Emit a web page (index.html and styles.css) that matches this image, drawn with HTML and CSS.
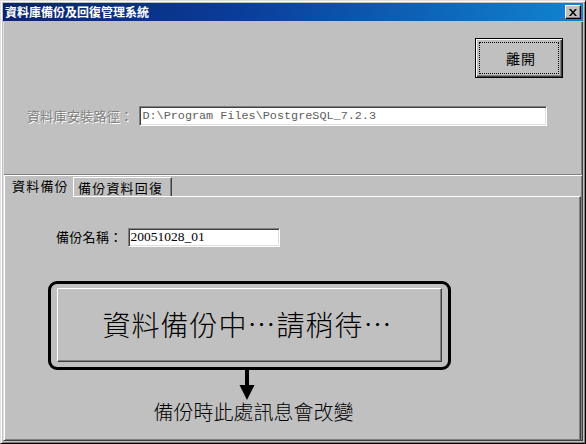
FILE: index.html
```html
<!DOCTYPE html>
<html lang="zh-Hant">
<head>
<meta charset="utf-8">
<title>資料庫備份及回復管理系統</title>
<link rel="stylesheet" href="styles.css">
</head>
<body>
<div class="window">
  <div class="titlebar">
    <span class="title">資料庫備份及回復管理系統</span>
    <span class="close"><svg width="8" height="7" viewBox="0 0 8 7"><path d="M0 0h2l2 2.5L6 0h2L5 3.5 8 7H6L4 4.5 2 7H0l3-3.5z" fill="#000"/></svg></span>
  </div>
  <div class="client">
    <div class="top">
      <div class="btn-row">
        <button class="btn default"><span class="focus">離開</span></button>
      </div>
      <div class="path-row">
        <span class="label disabled">資料庫安裝路徑：</span>
        <div class="field path">D:\Program Files\PostgreSQL_7.2.3</div>
      </div>
    </div>
    <div class="sep"></div>
    <div class="tabs">
      <div class="tab active">資料備份</div>
      <div class="tab">備份資料回復</div>
      <div class="tab-fill"></div>
    </div>
    <div class="panel">
      <div class="name-row">
        <span class="label">備份名稱：</span>
        <div class="field name">20051028_01</div>
      </div>
      <div class="callout">
        <div class="msg-frame">
          <div class="msg">資料備份中…請稍待…</div>
        </div>
        <svg class="arrow" width="16" height="30" viewBox="0 0 16 30"><rect x="6" y="0" width="4" height="16" fill="#000"/><path d="M0.5 15h15L8 30z" fill="#000"/></svg>
        <div class="note">備份時此處訊息會改變</div>
      </div>
    </div>
  </div>
</div>
</body>
</html>
```
FILE: styles.css
```css
html, body {
  margin: 0;
  padding: 0;
  width: 586px;
  height: 444px;
  overflow: hidden;
  background: #c0c0c0;
}

.window {
  width: 586px;
  height: 444px;
  box-sizing: border-box;
  border: 1px solid;
  border-color: #dfdfdf #000 #000 #dfdfdf;
  box-shadow: inset 1px 1px #fff, inset -1px -1px #808080;
  padding: 2px;
  display: flex;
  flex-direction: column;
  background: #c0c0c0;
  font-family: "Noto Sans CJK TC", "Liberation Sans", sans-serif;
  color: #000;
}

.titlebar {
  height: 18px;
  background: linear-gradient(90deg, #0a246a 0%, #0a3c9a 40%, #1084d0 100%);
  display: flex;
  align-items: center;
  justify-content: space-between;
  padding: 0 2px 0 2px;
}

.title {
  color: #fff;
  font-size: 12px;
  font-weight: 700;
  line-height: 18px;
  letter-spacing: 0;
}

.close {
  width: 16px;
  height: 14px;
  box-sizing: border-box;
  background: #c0c0c0;
  border: 1px solid;
  border-color: #fff #000 #000 #fff;
  box-shadow: inset -1px -1px #808080;
  display: flex;
  align-items: center;
  justify-content: center;
}

.client {
  flex: 1;
  margin-top: 1px;
  display: flex;
  flex-direction: column;
  border-left: 1px solid #dfdfdf;
  border-right: 1px solid #404040;
  border-bottom: 1px solid #404040;
  box-shadow: inset -1px -1px #808080;
}

.top {
  height: 152px;
  box-sizing: border-box;
  padding: 16px 19px 0 23px;
}

.btn-row {
  display: flex;
  justify-content: flex-end;
}

.btn {
  width: 88px;
  height: 40px;
  box-sizing: border-box;
  background: #c0c0c0;
  border: 1px solid #000;
  box-shadow: inset 1px 1px #fff, inset -1px -1px #404040, inset -2px -2px #808080;
  padding: 3px;
  font-family: inherit;
  margin: 0;
  display: flex;
}

.focus {
  flex: 1;
  border: 1px dotted #000;
  display: flex;
  align-items: center;
  justify-content: center;
  font-size: 14px;
  letter-spacing: 1px;
  padding-left: 4px;
}

.path-row {
  margin-top: 28px;
  display: flex;
  align-items: center;
}

.label {
  font-size: 13px;
  line-height: 20px;
  letter-spacing: 0.3px;
}

.label.disabled {
  color: #808080;
  text-shadow: 1px 1px 0 #fff;
  margin-right: 6px;
}

.field {
  background: #fff;
  box-sizing: border-box;
  border: 1px solid;
  border-color: #808080 #fff #fff #808080;
  box-shadow: inset 1px 1px #404040, inset -1px -1px #dfdfdf;
  display: flex;
  align-items: center;
  white-space: nowrap;
  overflow: hidden;
}

.field.path {
  width: 408px;
  height: 20px;
  font-family: "Liberation Mono", monospace;
  font-size: 11.8px;
  color: #606060;
  padding-left: 2px;
}

.sep {
  height: 0;
  border-top: 1px solid #808080;
  border-bottom: 1px solid #fff;
}

.tabs {
  height: 20px;
  display: flex;
}

.tab {
  font-size: 13px;
  letter-spacing: 1.2px;
  line-height: 19px;
  box-sizing: border-box;
}

.tab.active {
  width: 69px;
  padding-left: 7px;
  border-left: 1px solid #fff;
  height: 21px;
  position: relative;
  z-index: 1;
  background: #c0c0c0;
}

.tab:not(.active) {
  width: 99px;
  margin-top: 1px;
  padding-left: 4px;
  border-top: 1px solid #fff;
  border-left: 1px solid #fff;
  border-right: 1px solid #404040;
  box-shadow: inset -1px 0 #808080;
}

.tab-fill {
  flex: 1;
}

.panel {
  flex: 1;
  border-top: 1px solid #fff;
  border-left: 1px solid #fff;
  border-right: 1px solid #404040;
  box-shadow: inset -1px 0 #808080;
  margin-right: 1px;
  padding: 30px 0 0 51px;
  box-sizing: border-box;
}

.name-row {
  display: flex;
  align-items: center;
}

.name-row .label {
  margin-right: 5px;
}

.field.name {
  width: 152px;
  height: 19px;
  font-family: "Liberation Serif", serif;
  font-size: 13.5px;
  color: #000;
  padding-left: 2px;
}

.callout {
  margin-top: 34px;
  margin-left: -8px;
  width: 403px;
  display: flex;
  flex-direction: column;
  align-items: center;
}

.msg-frame {
  width: 403px;
  height: 89px;
  box-sizing: border-box;
  border: 3px solid #000;
  border-radius: 9px;
  padding: 4px 6px 5px 6px;
  display: flex;
}

.msg {
  flex: 1;
  box-sizing: border-box;
  border-top: 1px solid #fff;
  border-left: 1px solid #fff;
  border-right: 1px solid #404040;
  border-bottom: 1px solid #404040;
  box-shadow: inset -1px -1px #808080;
  display: flex;
  align-items: center;
  justify-content: center;
  font-size: 28px;
  font-weight: 300;
  letter-spacing: 1px;
  padding-bottom: 2px;
  padding-right: 4px;
}

.arrow {
  display: block;
  margin-left: -5px;
}

.note {
  font-size: 20px;
  font-weight: 300;
  line-height: 22px;
  margin-left: 8px;
  margin-top: 1px;
}
```
